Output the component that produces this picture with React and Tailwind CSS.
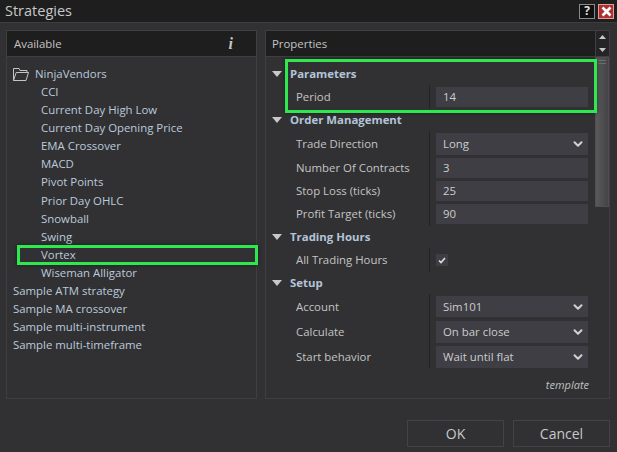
import React from 'react';
import { ChevronDown } from 'lucide-react';

const strategies = ['CCI', 'Current Day High Low', 'Current Day Opening Price', 'EMA Crossover', 'MACD', 'Pivot Points', 'Prior Day OHLC', 'Snowball', 'Swing', 'Vortex', 'Wiseman Alligator'];
const samples = ['Sample ATM strategy', 'Sample MA crossover', 'Sample multi-instrument', 'Sample multi-timeframe'];

const Arrow = () => (
  <svg width="10" height="6" viewBox="0 0 10 6" className="ml-[6px] mr-[8px] shrink-0">
    <path d="M0 0H10L5 6Z" fill="#c8c8c8" />
  </svg>
);

const Section = ({ title }) => (
  <div className="flex h-[22px] items-center">
    <Arrow />
    <span className="text-[11.4px] font-bold text-[#b4c4d8]">{title}</span>
  </div>
);

const Row = ({ label, value, h, ih = 'h-[20px]', select }) => (
  <div className={`flex items-center ${h}`}>
    <div className="w-[163px] shrink-0 pl-[30px] text-[11.4px] text-[#c4c4c4]">{label}</div>
    <div className="flex h-full w-[7px] shrink-0 border-l border-[#232325]" />
    <div className={`flex w-[152px] items-center justify-between bg-[#3e3e44] pl-[7px] pr-[3px] text-[11.4px] text-[#cccccc] ${ih}`}>
      <span>{value}</span>
      {select && <ChevronDown size={14} strokeWidth={3.5} className="text-[#d0d0d0]" />}
    </div>
  </div>
);

const Field = ({ children }) => <div className="h-[18.1px] leading-[18px] whitespace-nowrap">{children}</div>;

export default function App() {
  return (
    <div className="relative flex h-[452px] w-[617px] flex-col overflow-hidden bg-[#313133] font-['Open_Sans',sans-serif]">
      <div className="flex h-[23px] shrink-0 items-center justify-between border-b border-[#3d3d3f] bg-[#1e1e1e] pl-[5px] pr-[3px]">
        <span className="text-[14.5px] text-[#c8c8c8]">Strategies</span>
        <div className="flex items-center gap-[3px]">
          <div className="flex h-[15px] w-[16px] items-center justify-center border border-[#8a8a8a] bg-[#101010] text-[12px] font-bold leading-none text-[#e0e0e0]">?</div>
          <div className="flex h-[15px] w-[16px] items-center justify-center border border-[#d8a0a0] bg-[#b03030]">
            <svg width="11" height="11" viewBox="0 0 11 11">
              <path d="M1.5 1.5L9.5 9.5M9.5 1.5L1.5 9.5" stroke="#fff" strokeWidth="2.6" />
            </svg>
          </div>
        </div>
      </div>

      <div className="mt-[7px] flex h-[369px] gap-[8px] pl-[6px]">
        <div className="flex w-[251px] flex-col border border-[#3f3f41]">
          <div className="flex h-[26px] shrink-0 items-center justify-between border-b border-[#3f3f41] bg-[#1e1e1e] pl-[7px] pr-[23px] text-[11.4px] text-[#c4c4c4]">
            <span>Available</span>
            <span className="font-['Liberation_Serif',serif] text-[16px] font-bold italic">i</span>
          </div>
          <div className="pt-[8px] text-[11.4px] text-[#bccadb]">
            <div className="flex h-[18px] items-center pl-[6px]">
              <svg width="16" height="13" viewBox="0 0 16 13" fill="none" stroke="#c4c4c4" className="mr-[6px]">
                <path d="M.5 12.5V.5H6L7 2.5H14V4.5M.5 12.5H13L15.5 4.5H3.2L.5 12.5Z" />
              </svg>
              NinjaVendors
            </div>
            <div className="pl-[34px]">
              {strategies.map((s) => <Field key={s}>{s}</Field>)}
            </div>
            <div className="pl-[6px]">
              {samples.map((s) => <Field key={s}>{s}</Field>)}
            </div>
          </div>
        </div>

        <div className="flex w-[345px] flex-col border border-[#3f3f41]">
          <div className="flex h-[26px] shrink-0 items-center border-b border-[#3f3f41] bg-[#1e1e1e] text-[11.4px] text-[#c4c4c4]">
            <span className="flex-1 pl-[6px]">Properties</span>
            <div className="flex h-full w-[14px] flex-col items-center justify-center gap-[9px] border-l border-[#3f3f41] bg-[#252527]">
              <svg width="7" height="4" viewBox="0 0 7 4"><path d="M0 4H7L3.5 0Z" fill="#c8c8c8" /></svg>
              <svg width="7" height="4" viewBox="0 0 7 4"><path d="M0 0H7L3.5 4Z" fill="#c8c8c8" /></svg>
            </div>
          </div>
          <div className="flex min-h-0 flex-1">
            <div className="relative flex-1 pt-[6px]">
              <Section title="Parameters" />
              <Row label="Period" value="14" h="h-[24px]" />
              <Section title="Order Management" />
              <Row label="Trade Direction" value="Long" h="h-[25px]" ih="h-[22px]" select />
              <Row label="Number Of Contracts" value="3" h="h-[24px]" />
              <Row label="Stop Loss (ticks)" value="25" h="h-[22px]" />
              <Row label="Profit Target (ticks)" value="90" h="h-[24px]" />
              <Section title="Trading Hours" />
              <div className="flex h-[24px] items-center">
                <div className="w-[163px] shrink-0 pl-[30px] text-[11.4px] text-[#c4c4c4]">All Trading Hours</div>
                <div className="h-full w-[7px] shrink-0 border-l border-[#232325]" />
                <div className="flex h-[12px] w-[12px] items-center justify-center bg-[#3e3e44]">
                  <svg width="8" height="7" viewBox="0 0 8 7" fill="none"><path d="M1 3.5L3 5.5L7 1" stroke="#e0e0e0" strokeWidth="1.6" /></svg>
                </div>
              </div>
              <Section title="Setup" />
              <Row label="Account" value="Sim101" h="h-[25px]" ih="h-[21px]" select />
              <Row label="Calculate" value="On bar close" h="h-[26px]" ih="h-[22px]" select />
              <Row label="Start behavior" value="Wait until flat" h="h-[24px]" ih="h-[22px]" select />
              <div className="absolute right-[6px] bottom-[5px] text-[11px] italic text-[#c0c0c0]">template</div>
            </div>
            <div className="flex w-[14px] flex-col">
              <div className="flex h-[150px] flex-col gap-[2px] border border-[#505052] bg-gradient-to-r from-[#5a5a5c] to-[#444446] px-[2px] pt-[2px]">
                <div className="h-px bg-[#6e6e70]" />
                <div className="h-px bg-[#6e6e70]" />
              </div>
            </div>
          </div>
        </div>
      </div>

      <div className="mt-[21px] flex gap-[9px] pl-[407px]">
        <button className="h-[27px] w-[97px] border border-[#434345] text-[14px] text-[#c8c8c8]">OK</button>
        <button className="h-[27px] w-[97px] border border-[#434345] text-[14px] text-[#c8c8c8]">Cancel</button>
      </div>

      <div className="absolute left-[17px] top-[245px] h-[20px] w-[241px] border-[3px] border-[#2ee84f] shadow-[0_0_4px_rgba(0,0,0,0.4)]" />
      <div className="absolute left-[285px] top-[59px] h-[54px] w-[312px] border-[3px] border-[#2ee84f] shadow-[0_0_4px_rgba(0,0,0,0.4)]" />
    </div>
  );
}
